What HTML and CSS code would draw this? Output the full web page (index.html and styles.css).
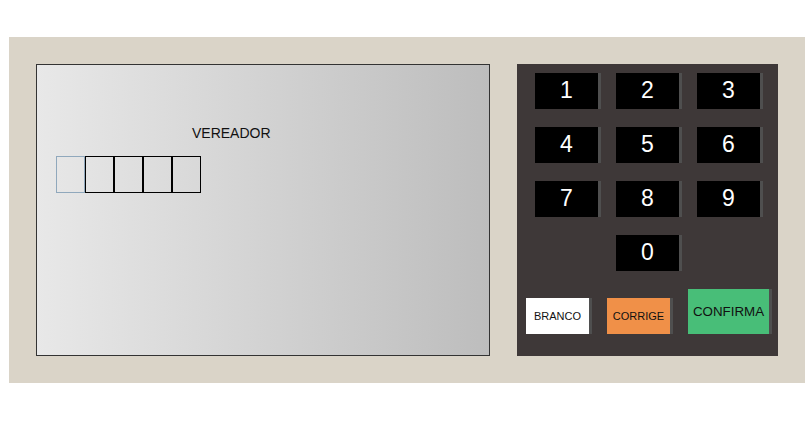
FILE: index.html
```html
<!DOCTYPE html>
<html lang="pt-BR">
<head>
<meta charset="utf-8">
<title>Urna</title>
<link rel="stylesheet" href="styles.css">
</head>
<body>
<div class="urna">
  <div class="tela">
    <div class="cargo">VEREADOR</div>
    <div class="digitos">
      <div class="digito ativo"></div>
      <div class="digito"></div>
      <div class="digito"></div>
      <div class="digito"></div>
      <div class="digito"></div>
    </div>
  </div>
  <div class="teclado">
    <div class="teclas">
      <button class="tecla">1</button>
      <button class="tecla">2</button>
      <button class="tecla">3</button>
      <button class="tecla">4</button>
      <button class="tecla">5</button>
      <button class="tecla">6</button>
      <button class="tecla">7</button>
      <button class="tecla">8</button>
      <button class="tecla">9</button>
      <button class="tecla zero">0</button>
    </div>
    <div class="acoes">
      <button class="acao branco">BRANCO</button>
      <button class="acao corrige">CORRIGE</button>
      <button class="acao confirma">CONFIRMA</button>
    </div>
  </div>
</div>
</body>
</html>
```

FILE: styles.css
```css
html, body {
  margin: 0;
  padding: 0;
  background: #ffffff;
}

body {
  font-family: "Liberation Sans", Arial, sans-serif;
}

.urna {
  box-sizing: border-box;
  width: 796px;
  height: 346px;
  margin: 37px 0 0 9px;
  padding: 27px;
  background: #dad4c8;
  display: flex;
  gap: 27px;
}

.tela {
  box-sizing: border-box;
  width: 454px;
  height: 292px;
  border: 1px solid #333333;
  background: linear-gradient(to right, #e8e8e8, #bdbdbd);
  padding: 60px 0 0 19px;
}

.cargo {
  font-size: 14px;
  line-height: 16px;
  color: #111111;
  padding-left: 136px;
}

.digitos {
  display: flex;
  margin-top: 15px;
}

.digito {
  width: 27px;
  height: 35px;
  border: 1px solid #000000;
}

.digito.ativo {
  border-color: #90a8bc;
}

.teclado {
  box-sizing: border-box;
  width: 261px;
  height: 292px;
  background: #3e3838;
  padding: 9px 0 0 9px;
}

.teclas {
  display: grid;
  grid-template-columns: repeat(3, 66px);
  column-gap: 15px;
  row-gap: 18px;
  margin-left: 9px;
}

button {
  font-family: "Liberation Sans", Arial, sans-serif;
  border: none;
  border-right: 3px solid #4f4f4f;
  padding: 0;
  margin: 0;
  box-sizing: border-box;
  cursor: pointer;
}

.tecla {
  width: 66px;
  height: 36px;
  background: #000000;
  color: #ffffff;
  font-size: 23px;
  line-height: 26px;
  padding-bottom: 3px;
}

.zero {
  grid-column: 2;
}

.acoes {
  display: flex;
  align-items: flex-end;
  gap: 15px;
  margin-top: 18px;
}

.acao {
  width: 66px;
  height: 36px;
  font-size: 11px;
  color: #111111;
}

.branco {
  background: #ffffff;
}

.corrige {
  background: #f09048;
}

.confirma {
  width: 84px;
  height: 45px;
  font-size: 13.333px;
  background: #48be78;
}
```
